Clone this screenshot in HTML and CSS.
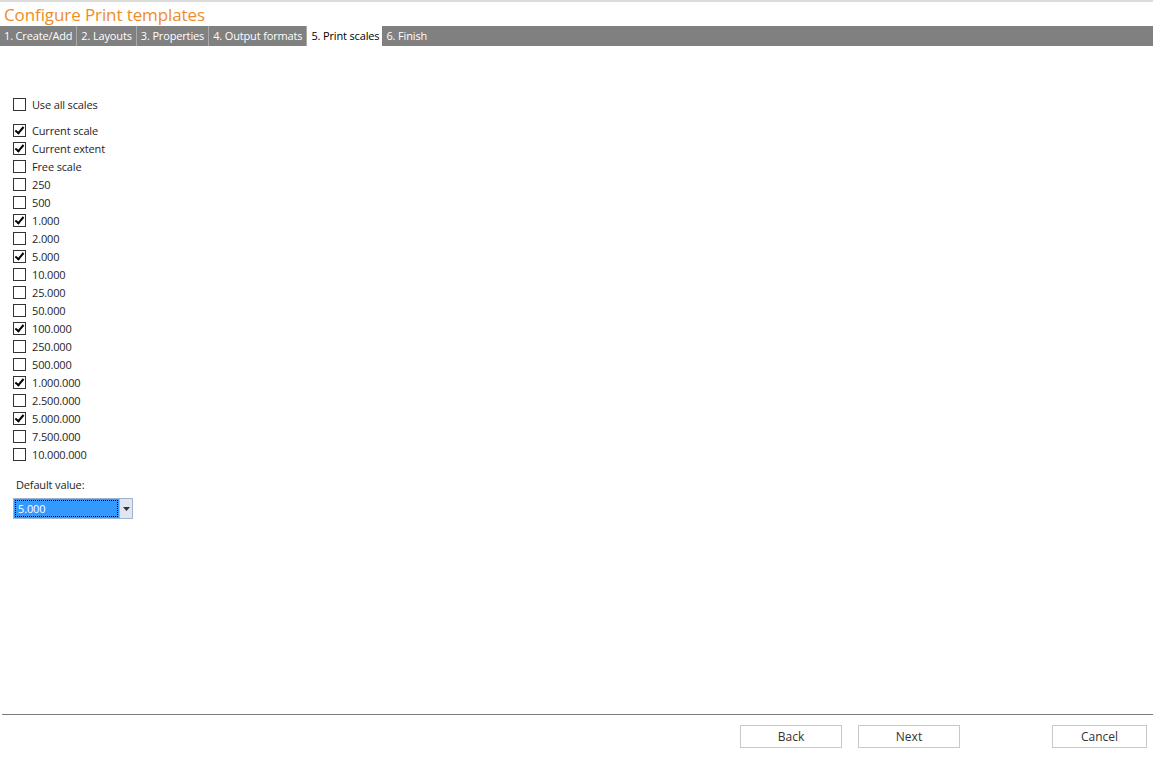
FILE: index.html
```html
<!DOCTYPE html>
<html lang="en">
<head>
  <meta charset="UTF-8">
  <title>Configure Print templates</title>
  <link rel="stylesheet" href="styles.css">
</head>
<body>
  <div class="wizard">
    <!-- title + steps -->
    <h1 class="title">Configure Print templates</h1>
    <div class="steps">
      <span class="step">1. Create/Add</span>
      <span class="step">2. Layouts</span>
      <span class="step">3. Properties</span>
      <span class="step">4. Output formats</span>
      <span class="step active">5. Print scales</span>
      <span class="step last">6. Finish</span>
    </div>

    <!-- scale list -->
    <div class="content">
      <label class="check all"><span class="box"></span>Use all scales</label>
      <div class="scales">
        <label class="check"><span class="box on"></span>Current scale</label>
        <label class="check"><span class="box on"></span>Current extent</label>
        <label class="check"><span class="box"></span>Free scale</label>
        <label class="check"><span class="box"></span>250</label>
        <label class="check"><span class="box"></span>500</label>
        <label class="check"><span class="box on"></span>1.000</label>
        <label class="check"><span class="box"></span>2.000</label>
        <label class="check"><span class="box on"></span>5.000</label>
        <label class="check"><span class="box"></span>10.000</label>
        <label class="check"><span class="box"></span>25.000</label>
        <label class="check"><span class="box"></span>50.000</label>
        <label class="check"><span class="box on"></span>100.000</label>
        <label class="check"><span class="box"></span>250.000</label>
        <label class="check"><span class="box"></span>500.000</label>
        <label class="check"><span class="box on"></span>1.000.000</label>
        <label class="check"><span class="box"></span>2.500.000</label>
        <label class="check"><span class="box on"></span>5.000.000</label>
        <label class="check"><span class="box"></span>7.500.000</label>
        <label class="check"><span class="box"></span>10.000.000</label>
      </div>

      <div class="default-label">Default value:</div>
      <div class="combo">
        <div class="combo-value"><span>5.000</span></div>
        <div class="combo-btn">
          <svg width="7" height="4" viewBox="0 0 7 4"><path d="M0 0h7L3.5 4z" fill="#333"/></svg>
        </div>
      </div>
    </div>

    <!-- footer buttons -->
    <div class="footer">
      <button class="btn">Back</button>
      <button class="btn next">Next</button>
      <button class="btn cancel">Cancel</button>
    </div>
  </div>
</body>
</html>
```

FILE: styles.css
```css
/* base */
body {
  margin: 0;
  font-family: 'Open Sans', 'Noto Sans', sans-serif;
  font-size: 11px;
  letter-spacing: -0.15px;
  color: #1e1e1e;
  background: white;
}

.wizard {
  width: 1153px;
  height: 759px;
  display: flex;
  flex-direction: column;
  border-top: 2px solid #dcdcdc;
  box-sizing: border-box;
}

/* header */
.title {
  margin: 0;
  padding: 2px 0 0 4px;
  height: 22px;
  font-size: 17px;
  font-weight: normal;
  line-height: 22px;
  letter-spacing: -0.1px;
  color: #f08c28;
}

.steps {
  display: flex;
  height: 20px;
  background: #808080;
}

.step {
  color: white;
  line-height: 20px;
  padding: 0 4px;
  border-right: 1px solid #a8a8a8;
  white-space: nowrap;
}

.step.active {
  background: white;
  color: black;
  border-right: none;
  padding: 0 3px 0 4px;
}

.step.last {
  border-right: none;
}

/* checkbox list */
.content {
  flex: 1;
  padding: 49px 0 0 13px;
}

.check {
  display: flex;
  align-items: center;
  height: 18px;
  white-space: nowrap;
}

.check.all {
  margin-bottom: 8px;
}

.box {
  width: 11px;
  height: 11px;
  border: 1px solid #333;
  margin-right: 6px;
  background: white;
  position: relative;
}

.box.on::after {
  content: "";
  position: absolute;
  left: 3px;
  top: 0px;
  width: 3px;
  height: 7px;
  border: solid #000;
  border-width: 0 2px 2px 0;
  transform: rotate(40deg);
}

.default-label {
  margin: 13px 0 0 3px;
  height: 18px;
  line-height: 18px;
}

.combo {
  display: flex;
  width: 120px;
  height: 21px;
  margin-top: 4px;
  border: 1px solid #a0b4d0;
  box-sizing: border-box;
}

.combo-value {
  flex: 1;
  background: #3399ff;
  padding: 1px;
}

.combo-value span {
  display: block;
  height: 15px;
  line-height: 15px;
  padding-left: 2px;
  color: white;
  border: 1px dotted #000;
}

.combo-btn {
  width: 12px;
  background: #dfe6f2;
  border-left: 1px solid #a0b4d0;
  display: flex;
  align-items: center;
  justify-content: center;
}

/* footer */
.footer {
  margin: 0 0 11px 2px;
  padding-top: 10px;
  border-top: 1px solid #7a7a7a;
  display: flex;
}

.btn {
  font-family: inherit;
  font-size: 12px;
  color: #333;
  width: 102px;
  height: 23px;
  background: white;
  border: 1px solid #c8c8c8;
  padding: 0;
}

.btn:first-child {
  margin-left: 738px;
}

.next {
  margin-left: 16px;
}

.cancel {
  width: 95px;
  margin-left: 92px;
}
```
